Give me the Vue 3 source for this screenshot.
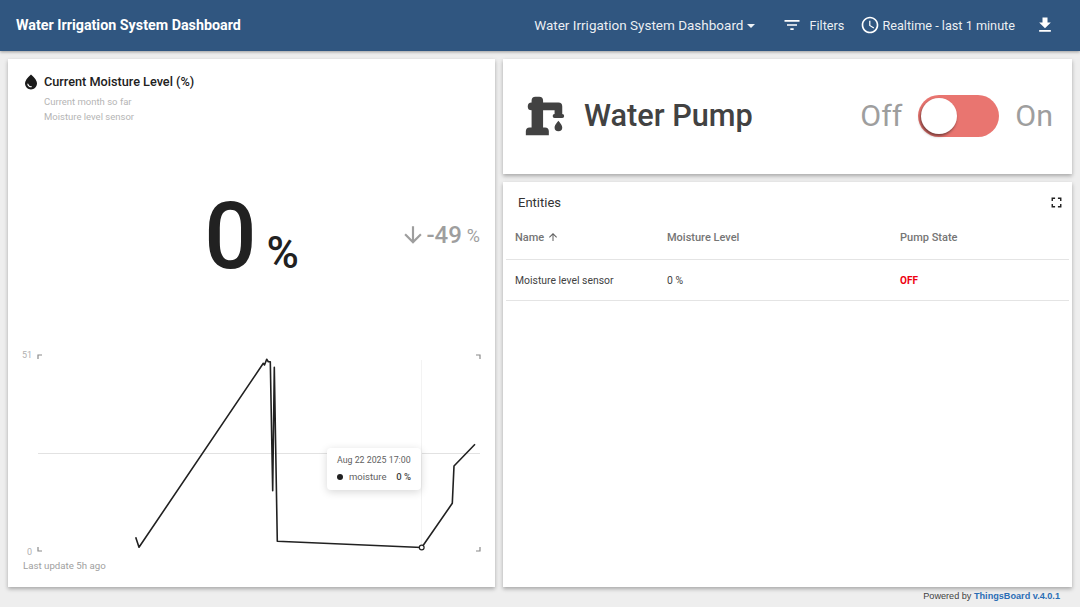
<template>
  <div class="page">
    <header class="toolbar">
      <div class="app-title">{{ title }}</div>
      <div class="tools">
        <button class="tool state-btn">
          {{ title }}
          <span class="caret"></span>
        </button>
        <button class="tool filters-btn">
          <svg class="ico" viewBox="0 0 24 24"><path d="M10 18h4v-2h-4v2zM3 6v2h18V6H3zm3 7h12v-2H6v2z" /></svg>
          <span>Filters</span>
        </button>
        <button class="tool time-btn">
          <svg class="ico" viewBox="0 0 24 24"><path d="M11.99 2C6.47 2 2 6.48 2 12s4.47 10 9.99 10C17.52 22 22 17.52 22 12S17.52 2 11.99 2zM12 20c-4.42 0-8-3.58-8-8s3.58-8 8-8 8 3.58 8 8-3.58 8-8 8zm.5-13H11v6l5.25 3.15.75-1.23-4.5-2.67z" /></svg>
          <span>Realtime - last 1 minute</span>
        </button>
        <button class="tool download-btn">
          <svg class="ico" viewBox="0 0 24 24"><path d="M19 9h-4V3H9v6H5l7 7 7-7zM5 18v2h14v-2H5z" /></svg>
        </button>
      </div>
    </header>

    <main class="grid">
      <section class="card moisture">
        <div class="m-head">
          <svg class="drop" viewBox="0 0 24 24"><path d="M12,2c-5.33,4.55-8,8.48-8,11.8c0,4.98,3.8,8.2,8,8.2s8-3.22,8-8.2C20,10.48,17.33,6.55,12,2z M7.83,14c0.37,0,0.67,0.26,0.74,0.62c0.41,2.22,2.28,2.98,3.64,2.87c0.43-0.02,0.79,0.32,0.79,0.75c0,0.4-0.32,0.73-0.72,0.75c-2.13,0.13-4.62-1.09-5.19-4.12C7.01,14.42,7.37,14,7.83,14z" /></svg>
          <div>
            <div class="m-title">Current Moisture Level (%)</div>
            <div class="m-sub">Current month so far</div>
            <div class="m-sub">Moisture level sensor</div>
          </div>
        </div>

        <div class="value-row">
          <div class="value"><span class="big">0</span><span class="unit">%</span></div>
          <div class="delta">
            <svg class="delta-arrow" viewBox="0 0 24 24"><path d="M20 12l-1.41-1.41L13 16.17V4h-2v12.17l-5.58-5.59L4 12l8 8 8-8z" /></svg>
            <span class="delta-num">-49</span>
            <span class="delta-unit">%</span>
          </div>
        </div>

        <div class="chart">
          <svg class="chart-svg" viewBox="8 340 487 218">
            <text class="axis" x="32" y="358" text-anchor="end">51</text>
            <text class="axis" x="32" y="555" text-anchor="end">0</text>
            <path class="corner" d="M38 359v-4h4M476 355h4v4M38 547v4h4M476 551h4v-4" />
            <line class="grid-line" x1="38" y1="453.5" x2="480" y2="453.5" />
            <line class="cursor-line" x1="421.5" y1="360" x2="421.5" y2="547" />
            <polyline class="series" :points="points" />
            <circle class="dot" cx="421.7" cy="547.5" r="2.4" />
          </svg>
          <div class="tooltip">
            <div class="tt-date">Aug 22 2025 17:00</div>
            <div class="tt-row">
              <span class="tt-dot"></span>
              <span class="tt-name">moisture</span>
              <span class="tt-val">0 %</span>
            </div>
          </div>
        </div>
        <div class="updated">Last update 5h ago</div>
      </section>

      <section class="card pump">
        <svg class="pump-ico" viewBox="0 0 24 24"><path d="M19,14.5C19,14.5 21,16.67 21,18A2,2 0 0,1 19,20A2,2 0 0,1 17,18C17,16.67 19,14.5 19,14.5M5,18V9A2,2 0 0,1 3,7A2,2 0 0,1 5,5V4A2,2 0 0,1 7,2H9A2,2 0 0,1 11,4V5H19A2,2 0 0,1 21,7V9L21,11A1,1 0 0,1 22,12A1,1 0 0,1 21,13H17A1,1 0 0,1 16,12A1,1 0 0,1 17,11V9H11V18H12A2,2 0 0,1 14,20V22H2V20A2,2 0 0,1 4,18H5Z" /></svg>
        <div class="pump-title">Water Pump</div>
        <div class="pump-switch">
          <span class="sw-label">Off</span>
          <span class="track"><span class="thumb"></span></span>
          <span class="sw-label">On</span>
        </div>
      </section>

      <section class="card entities">
        <div class="e-head">
          <span class="e-title">Entities</span>
          <svg class="e-full" viewBox="0 0 24 24"><path d="M7 14H5v5h5v-2H7v-3zm-2-4h2V7h3V5H5v5zm12 7h-3v2h5v-5h-2v3zM14 5v2h3v3h2V5h-5z" /></svg>
        </div>
        <table class="e-table">
          <thead>
            <tr>
              <th class="c1">Name <svg class="sort" viewBox="0 0 24 24"><path d="M4 12l1.41 1.41L11 7.83V20h2V7.83l5.58 5.59L20 12l-8-8-8 8z" /></svg></th>
              <th class="c2">Moisture Level</th>
              <th>Pump State</th>
            </tr>
          </thead>
          <tbody>
            <tr v-for="row in rows" :key="row.name">
              <td>{{ row.name }}</td>
              <td>{{ row.level }}</td>
              <td class="off">{{ row.state }}</td>
            </tr>
          </tbody>
        </table>
      </section>
    </main>

    <footer class="powered">Powered by <a>ThingsBoard v.4.0.1</a></footer>
  </div>
</template>

<script setup>
const title = 'Water Irrigation System Dashboard'

const rows = [
  { name: 'Moisture level sensor', level: '0 %', state: 'OFF' },
]

// series in page px, the svg viewBox is offset to match
const points = [
  [135.7, 537.3], [139, 547.3], [263.3, 363.3], [264.5, 365], [266.7, 359.3], [268.3, 361.7], [270.3, 361.7],
  [272.7, 490.7], [274.3, 367.3], [277.3, 541.3], [421.7, 547.5], [452.3, 503.3], [454, 466], [475, 444.3],
].map((p) => p.join(',')).join(' ')
</script>

<style>
html, body {
  margin: 0;
  height: 100%;
  background: #eeeeee;
  overflow: hidden;
}
</style>

<style scoped>
.page {
  width: 1080px;
  height: 607px;
  display: flex;
  flex-direction: column;
  background: #eeeeee;
  font-family: Roboto, "Liberation Sans", sans-serif;
  color: #212121;
}

.toolbar {
  height: 51px;
  flex: none;
  box-sizing: border-box;
  display: flex;
  align-items: center;
  justify-content: space-between;
  padding: 0 25px 1px 16px;
  background: #305680;
  color: #fff;
  box-shadow: 0 1px 3px rgba(0, 0, 0, 0.35);
  position: relative;
}

.app-title {
  font-size: 14.3px;
  font-weight: 700;
}

.tools {
  display: flex;
  align-items: center;
}

.tool {
  display: flex;
  align-items: center;
  padding: 0;
  border: 0;
  background: none;
  color: rgba(255, 255, 255, 0.92);
  font: 400 12.7px Roboto, sans-serif;
}

.state-btn {
  font-size: 13.5px;
}

.ico {
  width: 20px;
  height: 20px;
  fill: #fff;
}

.caret {
  width: 0;
  height: 0;
  margin-left: 4px;
  margin-top: 1px;
  border-left: 4.5px solid transparent;
  border-right: 4.5px solid transparent;
  border-top: 4.5px solid rgba(255, 255, 255, 0.92);
}

.filters-btn {
  margin-left: 27px;
  gap: 7px;
}

.time-btn {
  margin-left: 16px;
  gap: 2px;
}

.download-btn {
  margin-left: 20px;
}

.grid {
  flex: none;
  display: grid;
  grid-template-columns: 487px 569px;
  grid-template-rows: 115px 405px;
  gap: 8px;
  padding: 8px 8px 0;
}

.card {
  background: #fff;
  box-shadow: 0 2px 4px rgba(0, 0, 0, 0.3);
}

.moisture {
  grid-row: 1 / 3;
  display: flex;
  flex-direction: column;
  padding: 14px 15px 0;
}

.m-head {
  display: flex;
  gap: 4px;
}

.drop {
  width: 18px;
  height: 18px;
  fill: #1a1a1a;
  flex: none;
  margin-left: -1px;
}

.m-title {
  font-size: 12.7px;
  font-weight: 500;
  line-height: 18px;
}

.m-sub {
  font-size: 9.5px;
  line-height: 15px;
  color: #b5b5b5;
}

.m-title + .m-sub {
  margin-top: 3px;
}

.value-row {
  display: grid;
  grid-template-columns: 1fr auto 1fr;
  align-items: center;
  margin-top: 63px;
  height: 100px;
}

.value {
  grid-column: 2;
  display: flex;
  align-items: baseline;
}

.big {
  font-size: 92px;
  font-weight: 500;
  line-height: 100px;
}

.unit {
  margin-left: 10px;
  font-size: 44px;
  font-weight: 500;
}

.delta {
  grid-column: 3;
  justify-self: end;
  display: flex;
  align-items: center;
  color: #9e9e9e;
  margin-top: -4px;
}

.delta-arrow {
  width: 26px;
  height: 26px;
  fill: #9e9e9e;
}

.delta-num {
  font-size: 24px;
  font-weight: 500;
}

.delta-unit {
  font-size: 18px;
  margin-left: 5px;
}

.chart {
  position: relative;
  margin: 53px -15px 0;
  height: 218px;
}

.chart-svg {
  display: block;
  width: 487px;
  height: 218px;
}

.axis {
  font-size: 9px;
  fill: #b0b0b0;
  font-family: Roboto, sans-serif;
}

.corner {
  fill: none;
  stroke: #8a8a8a;
  stroke-width: 1.2;
}

.grid-line {
  stroke: #e2e2e2;
  stroke-width: 1;
}

.cursor-line {
  stroke: #f3f3f3;
  stroke-width: 1;
}

.series {
  fill: none;
  stroke: #212121;
  stroke-width: 1.6;
  stroke-linejoin: round;
}

.dot {
  fill: #fff;
  stroke: #212121;
  stroke-width: 1.2;
}

.tooltip {
  position: absolute;
  left: 319px;
  top: 108px;
  width: 94px;
  height: 42px;
  box-sizing: border-box;
  padding: 6px 10px 0;
  background: #fff;
  border-radius: 4px;
  box-shadow: 0 2px 8px rgba(0, 0, 0, 0.16);
}

.tt-date {
  font-size: 8.8px;
  line-height: 13px;
  color: #616161;
  white-space: nowrap;
}

.tt-row {
  display: flex;
  align-items: center;
  margin-top: 3px;
  font-size: 9.5px;
  line-height: 14px;
  white-space: nowrap;
}

.tt-dot {
  width: 6px;
  height: 6px;
  border-radius: 50%;
  background: #212121;
}

.tt-name {
  margin-left: 6px;
  color: #616161;
}

.tt-val {
  margin-left: auto;
  font-weight: 500;
  color: #424242;
}

.updated {
  margin-top: 1px;
  font-size: 9.7px;
  line-height: 14px;
  color: #a0a0a0;
}

.pump {
  display: flex;
  align-items: center;
  padding: 0 19px 2px;
}

.pump-ico {
  width: 46px;
  height: 46px;
  fill: #424242;
  flex: none;
}

.pump-title {
  margin-left: 16px;
  font-size: 30.7px;
  font-weight: 500;
  color: #424242;
}

.pump-switch {
  margin-left: auto;
  display: flex;
  align-items: center;
  gap: 16px;
}

.sw-label {
  font-size: 30.4px;
  color: #9e9e9e;
}

.track {
  display: flex;
  align-items: center;
  width: 81px;
  height: 42px;
  padding: 0 3px;
  box-sizing: border-box;
  border-radius: 21px;
  background: #e97570;
}

.thumb {
  width: 36px;
  height: 36px;
  border-radius: 50%;
  background: #fff;
  box-shadow: -1px 2px 3px rgba(0, 0, 0, 0.5);
}

.entities {
  padding: 0 3px;
  display: flex;
  flex-direction: column;
}

.e-head {
  height: 38px;
  display: flex;
  align-items: center;
  justify-content: space-between;
  padding: 2px 4px 0 12px;
  box-sizing: border-box;
}

.e-title {
  font-size: 13px;
  color: #333;
}

.e-full {
  width: 17px;
  height: 17px;
  fill: #212121;
}

.e-table {
  width: 563px;
  border-collapse: collapse;
  table-layout: fixed;
  font-size: 10.4px;
}

.e-table th {
  height: 39px;
  padding: 0 0 4px 9px;
  box-sizing: border-box;
  font-size: 11px;
  text-align: left;
  font-weight: 500;
  color: #757575;
  border-bottom: 1px solid #e4e4e4;
}

.e-table td {
  height: 41px;
  padding: 1px 0 0 9px;
  box-sizing: border-box;
  color: #424242;
  border-bottom: 1px solid #e4e4e4;
}

.c1 {
  width: 152px;
}

.c2 {
  width: 233px;
}

.sort {
  width: 12px;
  height: 12px;
  fill: #616161;
  vertical-align: -2px;
}

.e-table td.off {
  color: #ee0011;
  font-weight: 700;
  font-size: 10px;
}

.powered {
  margin-top: auto;
  padding: 0 20px 5px 0;
  text-align: right;
  font: 9.15px "Liberation Sans", Arial, sans-serif;
  color: #424242;
  line-height: 12px;
}

.powered a {
  color: #2a6db5;
  font-weight: 700;
}
</style>
